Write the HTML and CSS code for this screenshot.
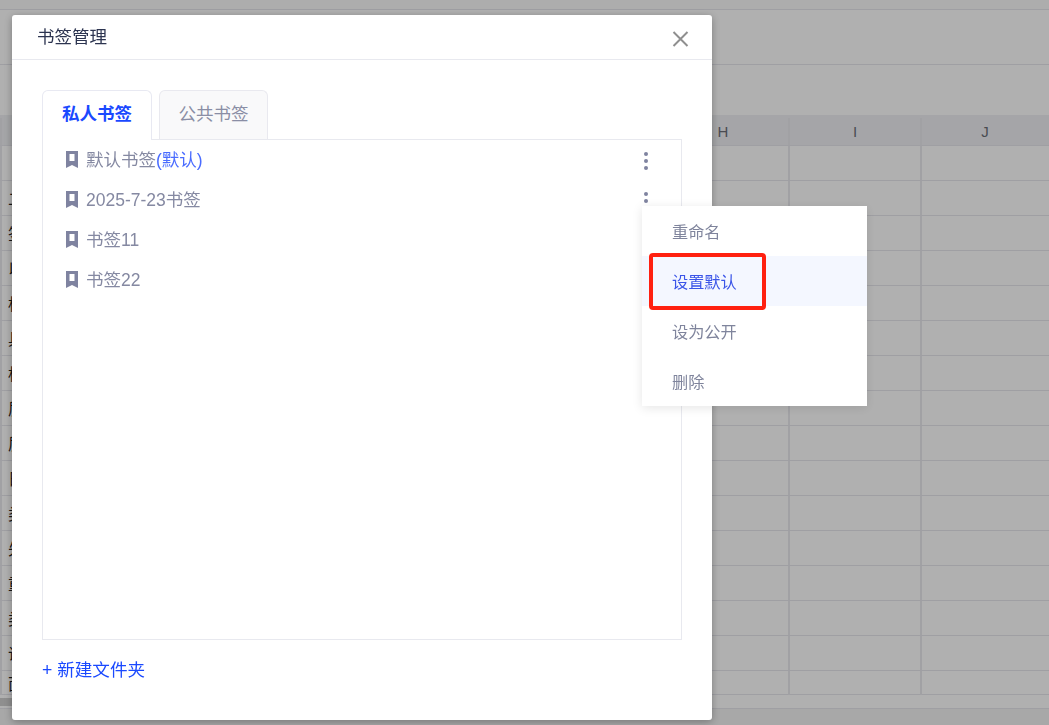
FILE: index.html
```html
<!DOCTYPE html>
<html lang="zh-CN">
<head>
<meta charset="utf-8">
<title>书签管理</title>
<link rel="stylesheet" href="styles.css">
</head>
<body>
<main class="sheet">
  <div class="bar bar-top"></div>
  <div class="bar bar-tools"></div>
  <div class="bar bar-formula"></div>
  <div class="row row-head"><span class="cell"></span><span class="cell">H</span><span class="cell">I</span><span class="cell cell-j">J</span></div>
  <div class="row"><span class="cell"></span><span class="cell"></span><span class="cell"></span><span class="cell"></span></div>
  <div class="row"><span class="cell cell-label">二</span><span class="cell"></span><span class="cell"></span><span class="cell"></span></div>
  <div class="row"><span class="cell cell-label">签</span><span class="cell"></span><span class="cell"></span><span class="cell"></span></div>
  <div class="row"><span class="cell cell-label">以</span><span class="cell"></span><span class="cell"></span><span class="cell"></span></div>
  <div class="row"><span class="cell cell-label">标</span><span class="cell"></span><span class="cell"></span><span class="cell"></span></div>
  <div class="row"><span class="cell cell-label">具</span><span class="cell"></span><span class="cell"></span><span class="cell"></span></div>
  <div class="row"><span class="cell cell-label">标</span><span class="cell"></span><span class="cell"></span><span class="cell"></span></div>
  <div class="row"><span class="cell cell-label">质</span><span class="cell"></span><span class="cell"></span><span class="cell"></span></div>
  <div class="row"><span class="cell cell-label">质</span><span class="cell"></span><span class="cell"></span><span class="cell"></span></div>
  <div class="row"><span class="cell cell-label">日</span><span class="cell"></span><span class="cell"></span><span class="cell"></span></div>
  <div class="row"><span class="cell cell-label">类</span><span class="cell"></span><span class="cell"></span><span class="cell"></span></div>
  <div class="row"><span class="cell cell-label">先</span><span class="cell"></span><span class="cell"></span><span class="cell"></span></div>
  <div class="row"><span class="cell cell-label">重</span><span class="cell"></span><span class="cell"></span><span class="cell"></span></div>
  <div class="row"><span class="cell cell-label">类</span><span class="cell"></span><span class="cell"></span><span class="cell"></span></div>
  <div class="row"><span class="cell cell-label">说</span><span class="cell"></span><span class="cell"></span><span class="cell"></span></div>
  <div class="row row-last"><span class="cell cell-label">面</span><span class="cell"></span><span class="cell"></span><span class="cell"></span></div>
  <div class="hscroll"><div class="hscroll-thumb"></div></div>
</main>

<div class="overlay"></div>

<section class="modal">
  <header class="modal-head">
    <h1 class="modal-title">书签管理</h1>
    <svg class="close" width="17" height="16" viewBox="0 0 17 16"><path d="M1.5 1 15.5 15M15.5 1 1.5 15" /></svg>
  </header>
  <div class="modal-body">
    <div class="tabs">
      <div class="tab tab-active">私人书签</div>
      <div class="tab">公共书签</div>
    </div>
    <ul class="list">
      <li class="item">
        <svg class="mark" width="12" height="17" viewBox="0 0 12 17"><path fill-rule="evenodd" d="M0 0H12V17L6 14 0 17ZM3.5 3V10H8.5V3Z"/></svg>
        <span class="item-name">默认书签<span class="item-default">(默认)</span></span>
        <svg class="more" width="4" height="18" viewBox="0 0 4 18"><circle cx="2" cy="2" r="2"/><circle cx="2" cy="9" r="2"/><circle cx="2" cy="16" r="2"/></svg>
      </li>
      <li class="item">
        <svg class="mark" width="12" height="17" viewBox="0 0 12 17"><path fill-rule="evenodd" d="M0 0H12V17L6 14 0 17ZM3.5 3V10H8.5V3Z"/></svg>
        <span class="item-name">2025-7-23书签</span>
        <svg class="more" width="4" height="18" viewBox="0 0 4 18"><circle cx="2" cy="2" r="2"/><circle cx="2" cy="9" r="2"/><circle cx="2" cy="16" r="2"/></svg>
      </li>
      <li class="item">
        <svg class="mark" width="12" height="17" viewBox="0 0 12 17"><path fill-rule="evenodd" d="M0 0H12V17L6 14 0 17ZM3.5 3V10H8.5V3Z"/></svg>
        <span class="item-name">书签11</span>
      </li>
      <li class="item">
        <svg class="mark" width="12" height="17" viewBox="0 0 12 17"><path fill-rule="evenodd" d="M0 0H12V17L6 14 0 17ZM3.5 3V10H8.5V3Z"/></svg>
        <span class="item-name">书签22</span>
      </li>
    </ul>
    <a class="new-folder">+ 新建文件夹</a>
  </div>

  <ul class="menu">
    <li class="menu-item">重命名</li>
    <li class="menu-item menu-item-hover">设置默认<span class="callout"></span></li>
    <li class="menu-item">设为公开</li>
    <li class="menu-item">删除</li>
  </ul>
</section>
</body>
</html>
```

FILE: styles.css
```css
* {
  box-sizing: border-box;
}

html,
body {
  margin: 0;
  height: 100%;
  overflow: hidden;
  background: #fff;
  font-family: "Liberation Sans", "Noto Sans CJK SC", sans-serif;
}

/* Spreadsheet behind the dialog */
.sheet {
  height: 725px;
  background: #f4f4f4;
  overflow: hidden;
}

.bar {
  background: #fff;
  border-bottom: 1px solid #e6e6ec;
}

.bar-top {
  height: 10px;
  background: #fbfbfb;
}

.bar-tools {
  height: 55px;
}

.bar-formula {
  height: 50px;
  border-bottom: 0;
}

.row {
  display: grid;
  grid-template-columns: 658px 132px 132px 132px;
  height: 35px;
  background: #fff;
  border-bottom: 1px solid #e6e6ec;
}

.row-head {
  height: 31px;
  padding-top: 3px;
  background: #eff0f3;
  color: #6c6f78;
  font-size: 15px;
}

.row-last {
  height: 24px;
}

.cell {
  display: flex;
  align-items: center;
  justify-content: center;
  border-right: 2px solid #e9e9ee;
}

.cell:first-child {
  border-left: 2px solid #e9e9ee;
  border-right: 0;
}

.cell-j {
  padding-right: 4px;
}

.cell-label {
  justify-content: flex-start;
  padding-left: 6px;
  color: #222;
  font-size: 16px;
}

.hscroll {
  height: 14px;
  padding-top: 3px;
  background: #fff;
  border-bottom: 1px solid #e6e6ec;
}

.hscroll-thumb {
  width: 300px;
  height: 8px;
  background: #cfcfcf;
}

.overlay {
  position: fixed;
  inset: 0;
  background: rgba(0, 0, 0, 0.31);
}

/* Dialog */
.modal {
  position: fixed;
  left: 12px;
  top: 15px;
  width: 700px;
  height: 705px;
  background: #fff;
  border-radius: 3px;
  box-shadow: 0 2px 8px rgba(0, 0, 0, 0.3);
}

.modal-head {
  display: flex;
  align-items: center;
  justify-content: space-between;
  height: 45px;
  padding: 0 23px 0 25px;
  border-bottom: 1px solid #e8e9ef;
}

.modal-title {
  margin: 0 0 4px;
  color: #2c3450;
  font-size: 17.5px;
  font-weight: 400;
}

.close {
  margin-top: 3px;
  fill: none;
  stroke: #8f8f8f;
  stroke-width: 2;
}

.modal-body {
  padding: 30px 30px 0;
}

.tabs {
  display: flex;
  gap: 7px;
  height: 50px;
}

.tab {
  display: flex;
  align-items: center;
  justify-content: center;
  width: 109px;
  height: 49px;
  padding-bottom: 6px;
  border: 1px solid #e9e9ef;
  border-bottom: 0;
  border-radius: 6px 6px 0 0;
  background: #f9f9fa;
  color: #8a8ea5;
  font-size: 17.5px;
}

.tab-active {
  position: relative;
  z-index: 1;
  width: 110px;
  height: 50px;
  border-color: #e8e9f2;
  background: #fff;
  color: #1a49ff;
  font-weight: 700;
}

.list {
  height: 501px;
  margin: -1px 0 0;
  padding: 1px 0 0;
  list-style: none;
  border: 1px solid #e8e9ef;
}

.item {
  display: flex;
  align-items: center;
  height: 40px;
  padding: 0 33px 0 23px;
  color: #8589a2;
  font-size: 17.5px;
}

.mark {
  flex: none;
  margin: 0 8px 3px 0;
  fill: #7f83a0;
}

.item-name {
  flex: 1;
  padding-bottom: 6px;
}

.item-default {
  color: #4a6cff;
}

.more {
  flex: none;
  fill: #7f83a0;
}

.new-folder {
  display: block;
  margin-top: 18px;
  color: #1a49ff;
  font-size: 17.6px;
  line-height: 24px;
}

/* Context menu */
.menu {
  position: absolute;
  left: 630px;
  top: 191px;
  width: 225px;
  height: 200px;
  margin: 0;
  padding: 0;
  list-style: none;
  background: #fff;
  box-shadow: 0 2px 10px rgba(0, 0, 0, 0.1);
}

.menu-item {
  position: relative;
  display: flex;
  align-items: center;
  height: 50px;
  padding: 0 0 1px 30px;
  color: #7f849c;
  font-size: 16.2px;
}

.menu-item-hover {
  background: #f4f7ff;
  color: #3b55e8;
}

.callout {
  position: absolute;
  left: 7px;
  top: -3px;
  width: 117px;
  height: 57px;
  border: 4px solid #ff2010;
  border-radius: 4px;
}
```
